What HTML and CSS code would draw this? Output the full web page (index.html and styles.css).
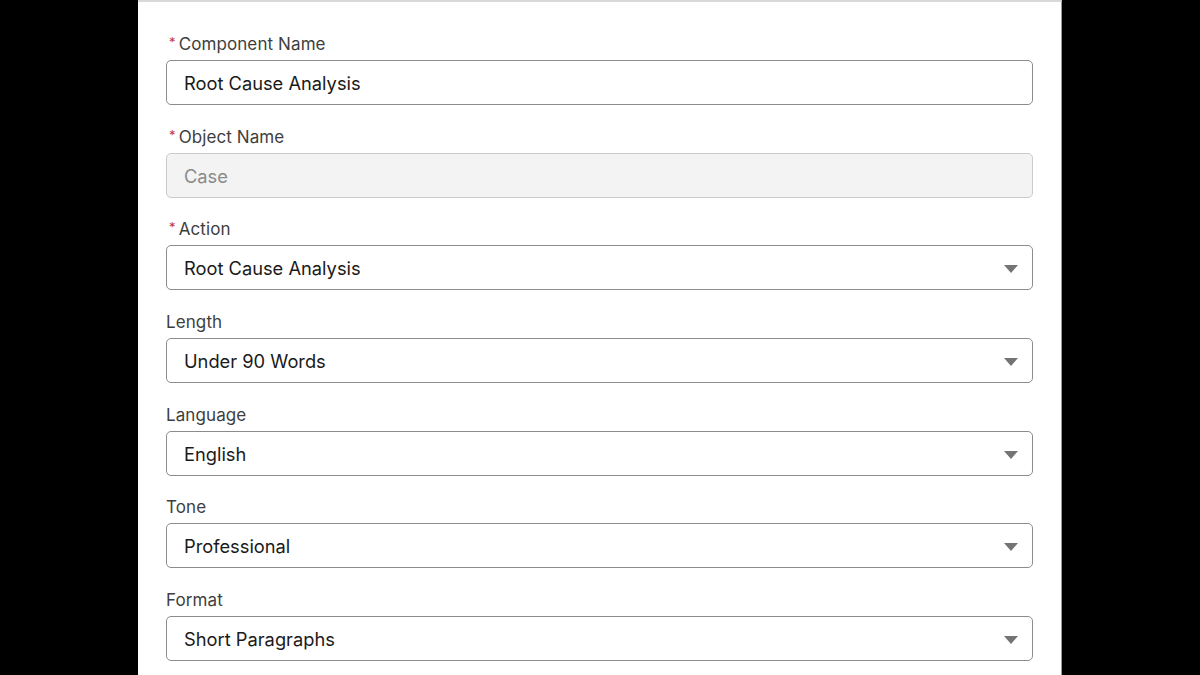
FILE: index.html
```html
<!DOCTYPE html>
<html lang="en">
<head>
<meta charset="utf-8">
<title>Component Settings</title>
<link rel="stylesheet" href="styles.css">
</head>
<body>
<div class="stage">
  <form class="panel">
    <div class="field">
      <label class="label"><span class="req">*</span>Component Name</label>
      <div class="input">Root Cause Analysis</div>
    </div>
    <div class="field">
      <label class="label"><span class="req">*</span>Object Name</label>
      <div class="input disabled">Case</div>
    </div>
    <div class="field">
      <label class="label"><span class="req">*</span>Action</label>
      <div class="input select">Root Cause Analysis<span class="caret"></span></div>
    </div>
    <div class="field">
      <label class="label">Length</label>
      <div class="input select">Under 90 Words<span class="caret"></span></div>
    </div>
    <div class="field">
      <label class="label">Language</label>
      <div class="input select">English<span class="caret"></span></div>
    </div>
    <div class="field">
      <label class="label">Tone</label>
      <div class="input select">Professional<span class="caret"></span></div>
    </div>
    <div class="field">
      <label class="label">Format</label>
      <div class="input select">Short Paragraphs<span class="caret"></span></div>
    </div>
  </form>
</div>
</body>
</html>
```

FILE: styles.css
```css
html, body {
  margin: 0;
  padding: 0;
  background: #000;
  height: 100%;
  overflow: hidden;
}
.stage {
  display: flex;
  height: 675px;
}
.panel {
  margin-left: 138px;
  width: 924px;
  height: 675px;
  box-sizing: border-box;
  background: #fff;
  border-top: 2px solid #d9d9d9;
  border-right: 1px solid #9a9a9a;
  padding: 32px 0 0 28px;
  display: flex;
  flex-direction: column;
  gap: 21.67px;
  font-family: "Inter", "Liberation Sans", sans-serif;
}
.field {
  display: flex;
  flex-direction: column;
}
.label {
  display: flex;
  align-items: center;
  height: 20px;
  margin-bottom: 6px;
  font-size: 17px;
  color: #3e3e3e;
  letter-spacing: 0.1px;
}
.req {
  color: #c23934;
  font-size: 13px;
  margin: 0 3px 0 3px;
  position: relative;
  top: -2px;
}
.input {
  position: relative;
  box-sizing: border-box;
  height: 45px;
  width: 867px;
  border: 1.5px solid #8c8c8c;
  border-radius: 5px;
  padding-left: 17px;
  padding-top: 1px;
  display: flex;
  align-items: center;
  font-size: 18.3px;
  color: #1a1a1a;
}
.input.disabled {
  background: #f3f3f3;
  border-color: #cacaca;
  color: #8a8a8a;
}
.caret {
  position: absolute;
  right: 14px;
  top: 19px;
  width: 0;
  height: 0;
  border-left: 7px solid transparent;
  border-right: 7px solid transparent;
  border-top: 8px solid #747474;
}
```
